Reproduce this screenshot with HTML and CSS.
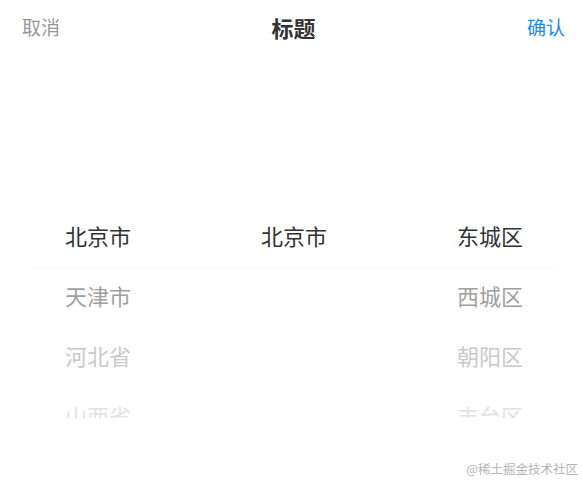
FILE: index.html
```html
<!DOCTYPE html>
<html lang="zh-CN">
<head>
<meta charset="utf-8">
<title>Picker</title>
<link rel="stylesheet" href="styles.css">
</head>
<body>
<div class="sheet">
  <div class="toolbar">
    <span class="btn cancel">取消</span>
    <span class="title">标题</span>
    <span class="btn confirm">确认</span>
  </div>
  <div class="picker">
    <div class="band"></div>
    <div class="columns">
      <ul class="col">
        <li class="r0">北京市</li>
        <li class="r1">天津市</li>
        <li class="r2">河北省</li>
        <li class="r3">山西省</li>
      </ul>
      <ul class="col">
        <li class="r0">北京市</li>
      </ul>
      <ul class="col">
        <li class="r0">东城区</li>
        <li class="r1">西城区</li>
        <li class="r2">朝阳区</li>
        <li class="r3">丰台区</li>
      </ul>
    </div>
  </div>
  <div class="footer">
    <span class="watermark">@稀土掘金技术社区</span>
  </div>
</div>
</body>
</html>
```
FILE: styles.css
```css
html, body {
  margin: 0;
  padding: 0;
  background: #fff;
  overflow: hidden;
}
body {
  font-family: "Noto Sans CJK SC", "Noto Sans", sans-serif;
}
.sheet {
  width: 582px;
  height: 483px;
  display: flex;
  flex-direction: column;
}
.toolbar {
  height: 54px;
  display: flex;
  align-items: center;
  justify-content: space-between;
  padding: 0 17px 0 22px;
  flex: none;
}
.btn {
  font-size: 19px;
  line-height: 24px;
}
.cancel { color: #969799; }
.confirm { color: #1989fa; }
.title {
  font-size: 22px;
  line-height: 24px;
  font-weight: 700;
  color: #323233;
}
.picker {
  position: relative;
  height: 364px;
  overflow: hidden;
  flex: none;
}
.band {
  position: absolute;
  left: 32px;
  right: 24px;
  top: 212px;
  height: 5px;
  background: #fcfcfc;
}
.columns {
  display: grid;
  grid-template-columns: repeat(3, 196px);
  padding-top: 151px;
}
.col {
  list-style: none;
  margin: 0;
  padding: 0;
}
.col li {
  height: 60px;
  line-height: 60px;
  text-align: center;
  font-size: 22px;
  white-space: nowrap;
}
.r0 { color: #323233; }
.r1 { color: #a0a0a0; }
.r2 { color: #c9c9c9; }
.r3 { color: #e2e2e2; }
.footer {
  flex: 1;
  display: flex;
  justify-content: flex-end;
  align-items: flex-start;
  padding: 43px 4px 0 0;
}
.watermark {
  font-size: 12.5px;
  color: #b5b5b5;
  line-height: 16px;
}
```
